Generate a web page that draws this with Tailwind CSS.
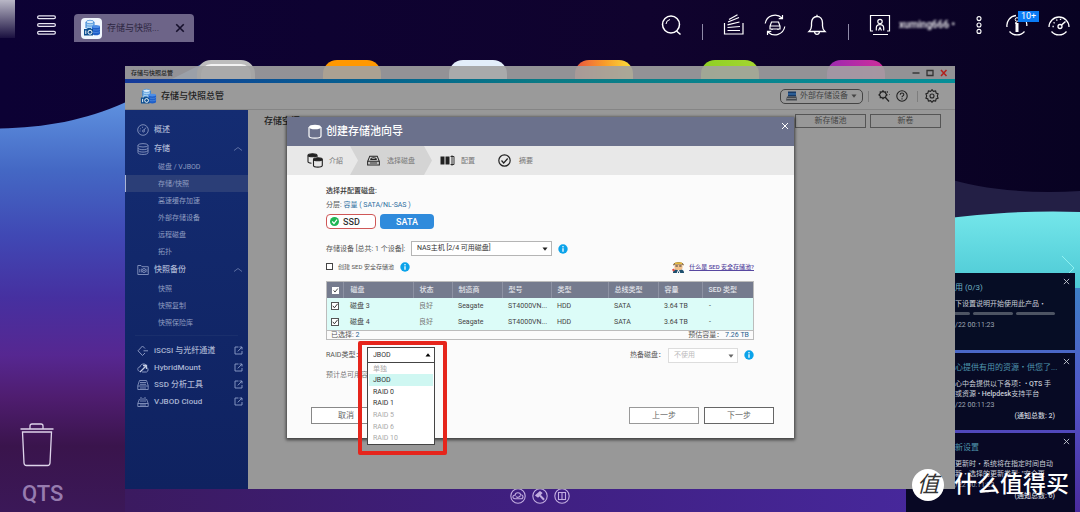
<!DOCTYPE html>
<html lang="zh-CN">
<head>
<meta charset="utf-8">
<meta name="viewport" content="width=device-width, initial-scale=1">
<title>存储与快照总管</title>
<script src="https://cdn.jsdelivr.net/npm/@tailwindcss/browser@4"></script>
</head>
<body class="font-['Roboto','Noto_Sans_CJK_SC',sans-serif] text-[7px] leading-[10px] text-[#555]">
<svg class="hidden">
  <defs>
    <symbol id="app" viewBox="0 0 18 18">
      <path d="M3 3v8c0 1 2 2 4 2s4-1 4-2V3z" fill="#a9d2f3"/><ellipse cx="7" cy="3" rx="4" ry="1.700" fill="#dcecf9" stroke="#4d93d9" stroke-width=".8"/>
      <path d="M3 3v6M11 3v4" stroke="#2f7fd0" stroke-width="1"/><path d="M3 6c1 1.500 7 1.500 8 0" stroke="#4d93d9" stroke-width=".8" fill="none"/>
      <path d="M9 7.500v7c0 1 2 1.800 4 1.800s4-.8 4-1.800v-7z" fill="#1f5fc9"/><ellipse cx="13" cy="7.500" rx="4" ry="1.500" fill="#4d8ee6"/>
      <path d="M9 10c1 1.400 7 1.400 8 0M9 12.500c1 1.400 7 1.400 8 0" stroke="#6ba4ee" stroke-width=".5" fill="none"/>
      <path d="M1 10h3l.7-1h3l.7 1H10v6.500H1z" fill="#0d4f91"/><circle cx="7" cy="13.200" r="2" fill="none" stroke="#fff" stroke-width="1"/><path d="M2.800 11.500v3.500" stroke="#fff" stroke-width="1"/>
    </symbol>
    <symbol id="info" viewBox="0 0 10 10"><circle cx="5" cy="5" r="4.700" fill="#0ba3ea"/><circle cx="5" cy="2.700" r=".8" fill="#fff"/><path d="M5 4.200v3.600" stroke="#fff" stroke-width="1.300"/></symbol>
    <symbol id="ext" viewBox="0 0 9 9"><path d="M4.500 1H1v7h7V5M5.500 1H8v2.500M8 1 3.800 5.400" fill="none" stroke="#8f9fca" stroke-width=".9"/></symbol>
    <symbol id="tick" viewBox="0 0 8 8"><path d="M1.800 3.800 3.400 5.800 6.600 1.800" fill="none" stroke="#333" stroke-width="1"/></symbol>
    <symbol id="x" viewBox="0 0 8 8"><path d="M1 1l6 6M7 1 1 7" fill="none" stroke="currentColor" stroke-width="1"/></symbol>
    <symbol id="down" viewBox="0 0 6 4"><path d="M.5.5h5L3 3.800z" fill="currentColor"/></symbol>
    <symbol id="up" viewBox="0 0 8 4"><path d="M0 3.500 4 .5l4 3" fill="none" stroke="#6f80b0" stroke-width=".8"/></symbol>
  </defs>
</svg>

<div class="relative h-screen overflow-hidden bg-[#0c0230]">
  <!-- Wallpaper -->
  <svg class="absolute inset-0 h-full w-full" viewBox="0 0 1080 512" preserveAspectRatio="none">
    <defs>
      <linearGradient id="sky" x1="0" y1="0" x2="1" y2="0"><stop offset="0" stop-color="#0c0134"/><stop offset=".6" stop-color="#10032e"/><stop offset="1" stop-color="#080222"/></linearGradient>
      <linearGradient id="left" x1="0" y1="100" x2="0" y2="512" gradientUnits="userSpaceOnUse"><stop offset="0" stop-color="#5f92e0"/><stop offset=".17" stop-color="#4468c4"/><stop offset=".33" stop-color="#4048b4"/><stop offset=".48" stop-color="#4630a0"/><stop offset=".62" stop-color="#562791"/><stop offset=".72" stop-color="#4f1d70"/><stop offset=".84" stop-color="#3a144c"/><stop offset="1" stop-color="#3b1858"/></linearGradient>
      <linearGradient id="right" x1="0" y1="288" x2="0" y2="512" gradientUnits="userSpaceOnUse"><stop offset="0" stop-color="#3e7fc6"/><stop offset=".5" stop-color="#5354c8"/><stop offset="1" stop-color="#4a2a9c"/></linearGradient>
      <linearGradient id="teal" x1="0" y1="212" x2="0" y2="290" gradientUnits="userSpaceOnUse"><stop offset="0" stop-color="#74e6ea"/><stop offset="1" stop-color="#4bc8d4"/></linearGradient>
      <linearGradient id="floor" x1="0" y1="0" x2="1" y2="0"><stop offset="0" stop-color="#3b1a60"/><stop offset=".5" stop-color="#3f1f80"/><stop offset="1" stop-color="#47289c"/></linearGradient>
      <linearGradient id="corner" x1="0" y1="0" x2="0" y2="1"><stop offset="0" stop-color="#b9b7c6"/><stop offset="1" stop-color="#1a1040"/></linearGradient>
    </defs>
    <path fill="url(#sky)" d="M0 0h1080v300H0z"/>
    <path fill="#231f45" d="M940 176c40 14 90 18 140 15v60H940z"/>
    <path fill="url(#teal)" d="M940 219c40-5 90-9 140-7v90H940z"/>
    <path fill="none" stroke="#8ff0f0" stroke-width="1" d="M1062 256l12 12-5 5"/>
    <path fill="url(#left)" d="M0 128.500c45-1 85-8 125-26l80-40v450H0z"/>
    <path fill="url(#right)" d="M940 288h140v224H940z"/>
    <path fill="url(#floor)" d="M125 480h800v32H125z"/>
    <path fill="url(#corner)" d="M0 0h15v38H0z"/>
  </svg>

  <!-- Desktop application icons -->
  <div class="absolute left-[197px] top-[60px] flex gap-[68px]" aria-hidden="true">
    <span class="h-12 w-[58px] rounded-[14px] border-4 border-[#bdbdbd] bg-[#f2f2f2]"></span>
    <span class="h-12 w-[58px] rounded-[14px] bg-[#ff9800]"></span>
    <span class="h-12 w-[58px] rounded-[14px] bg-[#e3eefa]"></span>
    <span class="h-12 w-[58px] rounded-[14px] bg-linear-to-r from-[#e8503c] via-[#f79a2a] to-[#f8e03a]"></span>
    <span class="h-12 w-[58px] rounded-[14px] bg-linear-to-r from-[#8ed024] to-[#a5d62f]"></span>
    <span class="h-12 w-[58px] rounded-[14px] bg-linear-to-r from-[#9c27b0] to-[#d02a9a]"></span>
  </div>

  <!-- Taskbar -->
  <header class="relative flex h-[50px] items-center pl-[37px] pr-[10px]">
    <button aria-label="主菜单" class="h-5 w-[19px]">
      <svg viewBox="0 0 19 20" class="h-5 w-[19px]" fill="none" stroke="#e8e6f2" stroke-width="1.200"><rect x=".6" y=".8" width="17.800" height="2.800" rx="1.400"/><rect x=".6" y="8.600" width="17.800" height="2.800" rx="1.400"/><rect x=".6" y="16.400" width="17.800" height="2.800" rx="1.400"/></svg>
    </button>
    <div class="ml-[18px] mt-[6px] flex h-7 w-[120px] items-center rounded-t bg-[#6d6488] px-[7px]">
      <span class="flex h-[21px] w-[21px] items-center justify-center rounded bg-[#f1f6fd]"><svg class="h-[18px] w-[18px]"><use href="#app"/></svg></span>
      <span class="ml-[5px] flex-1 whitespace-nowrap text-[9px] text-[#2d2742]">存储与快照...</span>
      <button aria-label="关闭" class="mr-[2px] text-[#16102c]"><svg class="h-[10px] w-[10px]" viewBox="0 0 8 8"><path d="M1 1l6 6M7 1 1 7" stroke="currentColor" stroke-width="1.300"/></svg></button>
    </div>
    <nav class="ml-auto flex items-center text-white">
      <button aria-label="搜索"><svg class="h-[22px] w-[22px]" viewBox="0 0 22 22" fill="none" stroke="currentColor" stroke-width="1.500"><circle cx="11" cy="10.500" r="8.500"/><path d="M16.500 17l4 3.500"/><path d="M6 10a5 5 0 0 1 4-4.500" stroke-width="1"/></svg></button>
      <span class="ml-5 mt-[14px] h-4 w-px bg-[#8f8aa8]"></span>
      <button aria-label="后台任务" class="ml-[20px]"><svg class="h-[22px] w-[22px]" viewBox="0 0 22 22" fill="none" stroke="currentColor" stroke-width="1.200"><path d="M1.500 9v11h18.500V9M4.500 16.500h12.500M4.500 13.500 17 12.500M4.500 10.800 16.500 8M5 8 16 3.500M6 5.500 14.500.8"/></svg></button>
      <button aria-label="外接设备" class="ml-[19px]"><svg class="h-[22px] w-[22px]" viewBox="0 0 22 22" fill="none" stroke="currentColor" stroke-width="1.200"><path d="M1.200 9.500A10 10 0 0 1 18 4M20.800 12.500A10 10 0 0 1 4 18M18.500 1v3.700h-3.800M3.500 21v-3.700h3.800"/><path d="M7.500 8h7l1.500 4v3H6v-3zM6 12h10M8 15v1M14 15v1"/></svg></button>
      <button aria-label="通知" class="ml-[20px]"><svg class="h-[22px] w-[22px]" viewBox="0 0 22 22" fill="none" stroke="currentColor" stroke-width="1.300"><path d="M3 17.500h16c-1.700-1.500-2.500-3-2.500-5.500V9c0-4-2.300-6.500-5.500-6.500S5.500 5 5.500 9v3c0 2.500-.8 4-2.500 5.500zM11 .8v1.700M8.500 18c.3 1.700 1 2.300 2.500 2.300s2.200-.6 2.500-2.300"/></svg></button>
      <span class="ml-[20px] mt-[14px] h-4 w-px bg-[#8f8aa8]"></span>
      <button aria-label="用户" class="ml-[20px] flex items-center gap-[8px]"><svg class="h-[22px] w-[22px]" viewBox="0 0 22 22" fill="none" stroke="currentColor" stroke-width="1.200"><path d="M4 17H1.500V1.500h19V17H18M4 20.500h15"/><circle cx="11" cy="7.500" r="2.200"/><path d="M7.300 16.500V14c0-2 1.500-3.300 3.700-3.300s3.700 1.300 3.700 3.300v2.500M9.500 16.500l1.500-3 1.500 3"/></svg>
        <span class="w-[55px] whitespace-nowrap text-left text-[10px] font-medium blur-[1px]">xuming666 •</span></button>
      <button aria-label="更多" class="ml-[22px]"><svg class="h-[18px] w-[6px]" viewBox="0 0 6 18" fill="none" stroke="currentColor" stroke-width="1.100"><circle cx="3" cy="2.600" r="2"/><circle cx="3" cy="9" r="2"/><circle cx="3" cy="15.400" r="2"/></svg></button>
      <button aria-label="帮助" class="relative ml-[24px]"><svg class="h-[22px] w-[22px]" viewBox="0 0 22 22" fill="none" stroke="currentColor" stroke-width="1.300"><path d="M1 13a10 10 0 0 1 9-11.500M3.500 17.500a10 10 0 0 0 15 0M18.500 4.500A10 10 0 0 1 20.800 12"/><circle cx="11" cy="5.500" r="1.800" stroke-width="1"/><path d="M11 9v9" stroke-width="3"/><path d="M9 9h2"/></svg>
        <span class="absolute -top-[3px] left-[12px] flex h-[11px] w-[21px] items-center justify-center bg-[#0a7bf5] text-[9px] leading-none">10+</span></button>
      <button aria-label="资源监控" class="ml-[20px]"><svg class="h-[22px] w-[22px]" viewBox="0 0 22 22" fill="none" stroke="currentColor" stroke-width="1.300"><path d="M1 13A10 10 0 1 1 21 13M3.500 17.500a10 10 0 0 0 15 0"/><circle cx="12" cy="12.500" r="2"/><path d="m13.500 11 4-3.500" stroke-width="1.600"/><path d="M4.500 12.500h1.300M5.500 8.500l1.200.6M8.500 5.500l.7 1.200M12.500 4.800v1.300" /></svg></button>
    </nav>
  </header>

  <!-- Recycle bin and brand -->
  <div class="absolute bottom-[7px] left-[20px] flex flex-col">
    <svg class="h-11 w-[34px]" viewBox="0 0 34 44" fill="none" stroke="#ded4ea" stroke-width="1.300"><path d="M.5 6h33M10 5.500V3c0-1.200.8-2 2-2h9c1.200 0 2 .8 2 2v2.500M2.500 9h29L30 40c-.1 1.500-1 2.500-2.500 2.500h-21C5 42.500 4.100 41.500 4 40z"/></svg>
    <span class="ml-[2px] mt-4 text-[22px] font-medium leading-[22px] text-[#977caf]">QTS</span>
  </div>

  <!-- Notifications -->
  <aside class="absolute bottom-0 right-[5px] top-[273px] flex w-[169px] flex-col gap-[3px] text-[#c9ced8]">
    <article class="relative h-[77px] bg-[#060d25] pl-[49px] pr-5 pt-[10px]">
      <button aria-label="关闭" class="absolute right-[5px] top-[5px]"><svg class="h-[7px] w-[7px]"><use href="#x"/></svg></button>
      <h3 class="text-[8px] text-[#6fb0c2]">用 (0/3)</h3>
      <p class="mt-[6px] whitespace-nowrap">下设置说明开始使用此产品・</p>
      <div class="mt-[3px] flex gap-[3px]"><span class="h-[3px] w-[15px] rounded-r bg-[#4d5463]"></span><span class="h-[3px] flex-1 rounded bg-[#4d5463]"></span><span class="h-[3px] flex-1 rounded bg-[#4d5463]"></span></div>
      <p class="mt-[5px] text-[#9fa6b4]">/22 00:11:23</p>
    </article>
    <article class="relative h-[77px] bg-[#070a24] pl-[49px] pr-5 pt-[10px]">
      <button aria-label="关闭" class="absolute right-[5px] top-[5px]"><svg class="h-[7px] w-[7px]"><use href="#x"/></svg></button>
      <h3 class="whitespace-nowrap text-[8px] text-[#4f97ae]">心提供有用的资源・供您了...</h3>
      <p class="mt-[6px] whitespace-nowrap">心中会提供以下各项：• <b class="font-medium">QTS</b> 手<br>或资源 • <b class="font-medium">Helpdesk</b>支持平台</p>
      <p class="mt-px text-[#9fa6b4]">/22 00:11:23</p>
      <p class="mt-px text-right font-medium">(通知总数: 2)</p>
    </article>
    <article class="relative flex-1 bg-[#080824] pl-[49px] pr-5 pt-[10px]">
      <button aria-label="关闭" class="absolute right-[5px] top-[5px]"><svg class="h-[7px] w-[7px]"><use href="#x"/></svg></button>
      <h3 class="text-[8px] text-[#4f97ae]">新设置</h3>
      <p class="mt-[6px] whitespace-nowrap">更新时・系统将在指定时间自动<br>新・选择的更新类型: "安全更</p>
      <p class="mt-px text-[#9fa6b4]">/22 00:11:23</p>
      <p class="mt-px text-right font-medium">(通知总数: 6)</p>
    </article>
  </aside>

  <!-- Dock -->
  <div class="absolute bottom-[8px] left-1/2 flex -translate-x-1/2 gap-[6px]">
    <a href="#" aria-label="云"><svg class="h-4 w-4" viewBox="0 0 16 16" fill="none" stroke="#c3aee0" stroke-width="1.100"><circle cx="8" cy="8" r="7.200"/><path d="M11.500 10.800H5c-3 0-2.500-4 0-3.500C5.500 4 10 4 10.800 6.800c3 0 2.500 4 .7 4M6 8.500c1 1.500 3.500 1 4.500-1"/></svg></a>
    <a href="#" aria-label="工具"><svg class="h-4 w-4" viewBox="0 0 16 16" fill="none" stroke="#c3aee0" stroke-width="1.100"><circle cx="8" cy="8" r="7.200"/><path d="M3.800 7.500 8 3.800 9.800 5 6 9z" fill="#c3aee0"/><path d="m8 7.500 4 4.200" stroke-width="2"/></svg></a>
    <a href="#" aria-label="书"><svg class="h-4 w-4" viewBox="0 0 16 16" fill="none" stroke="#c3aee0" stroke-width="1.100"><circle cx="8" cy="8" r="7.200"/><path d="M4.500 4.500H8v7H4.500zM8 4.500h3.500v7H8z"/></svg></a>
  </div>

  <!-- Storage manager window -->
  <main class="absolute bottom-[23px] left-[125px] right-[125px] top-[66px] flex flex-col">
    <div class="flex h-[13px] shrink-0 items-center bg-[#a2a2a2]/90 pl-[6px] pr-[7px] text-[6px] font-medium text-[#222]">
      <span>存储与快照总管</span>
      <div class="ml-auto flex items-center gap-[6px]">
        <button aria-label="最小化"><svg class="h-2 w-2" viewBox="0 0 8 8"><path d="M.5 4h7" stroke="#333" stroke-width="1.400"/></svg></button>
        <button aria-label="最大化"><svg class="h-2 w-2" viewBox="0 0 8 8"><path d="M1 1.500h6v5H1z" fill="none" stroke="#333" stroke-width="1.300"/></svg></button>
        <button aria-label="关闭窗口"><svg class="h-2 w-2" viewBox="0 0 8 8"><path d="m1 1 5.500 6M6.500 1 1 7" stroke="#b3201c" stroke-width="1.500"/></svg></button>
      </div>
    </div>
    <div class="h-1 shrink-0 bg-linear-to-r from-[#15399a] via-[#0b7a85] to-[#068f98]"></div>
    <div class="flex h-[27px] shrink-0 items-center border-b border-[#858585] bg-[#9a9a9a] pl-[15px] pr-4">
      <svg class="h-[17px] w-[17px]"><use href="#app"/></svg>
      <h1 class="ml-[4px] text-[9px] font-medium text-[#222]">存储与快照总管</h1>
      <button class="ml-auto flex h-[15px] w-[83px] items-center rounded-[5px] border border-[#444] px-[5px] text-[8px] text-[#444]">
        <svg class="mr-[3px] h-[10px] w-[11px]" viewBox="0 0 11 10"><path d="M2 .5h8v5H2z" fill="#173a66"/><path d="M2 3h8" stroke="#3f7ec2"/><path d="M1 5.500h9.500l.5 4H0z" fill="#44494f"/><path d="M1 7.500h9" stroke="#aaa" stroke-width=".6"/></svg>
        外部存储设备
        <svg class="ml-auto h-[4px] w-[6px]"><use href="#down"/></svg>
      </button>
      <span class="ml-[5px] h-[11px] w-px bg-[#7d7d7d]"></span>
      <button aria-label="诊断" class="ml-[9px]"><svg class="h-3 w-3" viewBox="0 0 12 12" fill="none" stroke="#222" stroke-width="1.200"><path d="m5 .8 1 1.200 1.700-.2v1.700L9 5 7.700 6v1.700L6 7.500 5 8.800 4 7.500l-1.700.2V6L1 5l1.300-1.500V1.800L4 2zM7 7l4 4.500"/><path d="M9.500 1v2M11 4.500h.8" stroke-width=".7"/></svg></button>
      <button aria-label="帮助" class="ml-[6px]"><svg class="h-3 w-3" viewBox="0 0 12 12" fill="none" stroke="#222" stroke-width="1.100"><circle cx="6" cy="6" r="5.200"/><path d="M4.200 4.700C4.200 2.400 7.800 2.400 7.800 4.600 7.800 6 6 5.800 6 7.300M6 8.300v1.200"/></svg></button>
      <span class="ml-[9px] h-[11px] w-px bg-[#7d7d7d]"></span>
      <button aria-label="设置" class="ml-[7px]"><svg class="h-[14px] w-[14px]" viewBox="0 0 14 14" fill="none" stroke="#222" stroke-width="1.100"><path d="m7 .7 1.400 1.700 2.200-.5.500 2.100 2 .9-.8 2.100.8 2.100-2 .9-.5 2.100-2.200-.5L7 13.300l-1.400-1.700-2.200.5-.5-2.100-2-.9L1.700 7 .9 4.900l2-.9.5-2.100 2.200.5z"/><circle cx="7" cy="7" r="2"/></svg></button>
    </div>

    <div class="flex min-h-0 flex-1">
      <nav class="w-[123px] shrink-0 bg-linear-to-b from-[#142c72] to-[#0f2260] pt-[11px] text-[#8f9cc0]">
        <a href="#" class="flex h-[18px] items-center px-[12px] text-[8px] font-medium text-[#a9b4d2]"><svg class="mr-[5px] h-3 w-3" viewBox="0 0 12 12" fill="none" stroke="#8795c0" stroke-width=".9"><circle cx="6" cy="6" r="5.300"/><circle cx="6.500" cy="7" r="1"/><path d="m7 6 2-2.500M2.500 7h1M3 4.500l.8.5M5.500 2.800v1"/></svg>概述</a>
        <a href="#" class="flex h-[19px] items-center px-[12px] text-[8px] font-medium text-[#a9b4d2]"><svg class="mr-[5px] h-3 w-3" viewBox="0 0 12 12" fill="none" stroke="#8795c0" stroke-width=".9"><ellipse cx="6" cy="2.300" rx="5" ry="1.700"/><path d="M1 2.300v7.500c0 2.200 10 2.200 10 0V2.300M1 5c0 2.200 10 2.200 10 0M1 7.400c0 2.200 10 2.200 10 0"/></svg>存储<svg class="ml-auto mr-[-6px] h-1 w-2"><use href="#up"/></svg></a>
        <ul>
          <li><a href="#" class="flex h-[17px] items-center pl-[33px]">磁盘 / VJBOD</a></li>
          <li><a href="#" class="flex h-[17px] items-center border-l border-[#aab4d4] bg-[#2b3e77] pl-[32px]">存储/快照</a></li>
          <li><a href="#" class="flex h-[17px] items-center pl-[33px]">高速缓存加速</a></li>
          <li><a href="#" class="flex h-[17px] items-center pl-[33px]">外部存储设备</a></li>
          <li><a href="#" class="flex h-[17px] items-center pl-[33px]">远程磁盘</a></li>
          <li><a href="#" class="flex h-[17px] items-center pl-[33px]">拓扑</a></li>
        </ul>
        <a href="#" class="flex h-5 items-center px-[12px] text-[8px] font-medium text-[#a9b4d2]"><svg class="mr-[5px] h-3 w-3" viewBox="0 0 12 12" fill="none" stroke="#8795c0" stroke-width=".9"><path d="M.8 10.500v-9H4l1 1.200h6.300v7.800zM2.800 5v3.500"/><circle cx="7" cy="6.500" r="2"/><circle cx="7" cy="6.500" r=".5"/><path d="M4.500 4.500v4M10 4.500v4" stroke-width=".6"/></svg>快照备份<svg class="ml-auto mr-[-6px] h-1 w-2"><use href="#up"/></svg></a>
        <ul>
          <li><a href="#" class="flex h-[17px] items-center pl-[33px]">快照</a></li>
          <li><a href="#" class="flex h-[17px] items-center pl-[33px]">快照复制</a></li>
          <li><a href="#" class="flex h-[17px] items-center pl-[33px]">快照保险库</a></li>
        </ul>
        <hr class="mx-[10px] mb-[6px] mt-[4px] border-[#1a2f6c]">
        <a href="#" class="flex h-[17px] items-center pl-[12px] pr-[5px] text-[8px] font-medium text-[#a9b4d2]"><svg class="mr-[5px] h-3 w-3" viewBox="0 0 12 12" fill="none" stroke="#8795c0" stroke-width="1"><path d="M8 3.500 5.500 1 1 5.800 5.500 10.500 8 8M6.500 5.800H11"/></svg>iSCSI 与光纤通道<svg class="ml-auto h-[9px] w-[9px]"><use href="#ext"/></svg></a>
        <a href="#" class="flex h-[17px] items-center pl-[12px] pr-[5px] text-[8px] font-medium text-[#a9b4d2]"><svg class="mr-[5px] h-3 w-3" viewBox="0 0 12 12" fill="none" stroke="#8795c0" stroke-width="1"><path d="M2.500 9.500C-.5 8 1 4.500 3 5c.5-3.500 5-4 6.500-1.500M5 10h4.500c2-.5 2-3.500.5-4.500"/><path d="m3 10 6-6M6 3.500h3.500V7" stroke="#c4cce2" stroke-width="1.300"/></svg>HybridMount<svg class="ml-auto h-[9px] w-[9px]"><use href="#ext"/></svg></a>
        <a href="#" class="flex h-[17px] items-center pl-[12px] pr-[5px] text-[8px] font-medium text-[#a9b4d2]"><svg class="mr-[5px] h-3 w-3" viewBox="0 0 12 12" fill="none" stroke="#8795c0" stroke-width=".9"><path d="M2.500 1.500h7l1.700 5v4H.8v-4zM.8 7h10.400M3 3.500h6M3 5.300h6M3 9h6"/></svg>SSD 分析工具<svg class="ml-auto h-[9px] w-[9px]"><use href="#ext"/></svg></a>
        <a href="#" class="flex h-[17px] items-center pl-[12px] pr-[5px] text-[8px] font-medium text-[#a9b4d2]"><svg class="mr-[5px] h-3 w-3" viewBox="0 0 12 12" fill="none" stroke="#8795c0" stroke-width=".9"><path d="M2.500 3 .8 7.500v3h10.400v-3L9.500 3M.8 7.500h10.400M4 1v5M6 2v4M8 1v5M3 9h6"/></svg>VJBOD Cloud<svg class="ml-auto h-[9px] w-[9px]"><use href="#ext"/></svg></a>
      </nav>
      <section class="flex flex-1 items-start bg-[#989898] pl-4 pr-[14px] pt-[4px]">
        <h2 class="mt-[2px] text-[9px] font-medium text-[#222]">存储空间</h2>
        <button class="ml-auto h-[14px] w-[71px] border border-[#555] text-[8px] text-[#444]">新存储池</button>
        <button class="ml-1 h-[14px] w-[71px] border border-[#555] text-[8px] text-[#444]">新卷</button>
      </section>
    </div>

    <!-- Create storage pool wizard -->
    <div role="dialog" aria-label="创建存储池向导" class="absolute left-[162px] right-[161px] top-[51px] flex flex-col bg-[#fbfbfb] shadow-[0_1px_3px_1px_#0009]">
      <div class="flex h-[29px] items-center bg-[#6b718c] pl-[21px] pr-[5px] text-white">
        <svg class="h-[15px] w-[14px]" viewBox="0 0 14 15"><path d="M1 3v9c0 2.800 12 2.800 12 0V3" fill="none" stroke="#fff" stroke-width="1.200"/><ellipse cx="7" cy="3" rx="6" ry="2.300" fill="#fff"/></svg>
        <h2 class="ml-[4px] text-[11px] font-medium">创建存储池向导</h2>
        <button aria-label="关闭向导" class="mb-[11px] ml-auto"><svg class="h-2 w-2"><use href="#x"/></svg></button>
      </div>
      <ol class="flex h-[29px] bg-[#e8e8e8] text-[#777]">
        <li class="flex w-[63px] items-center pl-5"><svg class="mr-[6px] h-[15px] w-4" viewBox="0 0 16 15" fill="none" stroke="#222" stroke-width="1.100"><path d="M1 2.500v6.300c0 .8 1.500 1.300 3.500 1.400M10 2.500V4"/><ellipse cx="5.500" cy="2.300" rx="4.500" ry="1.500" fill="#222"/><path d="M6.500 6.500v6c0 2.200 8.800 2.200 8.800 0v-6"/><ellipse cx="10.900" cy="6.300" rx="4.400" ry="1.500" fill="#222"/></svg>介紹</li>
        <li aria-current="step" class="flex w-[82px] items-center bg-[#d4d4d4] pl-[17px] [clip-path:polygon(0_0,74px_0,100%_50%,74px_100%,0_100%,8px_50%)]"><svg class="mr-[7px] h-[11px] w-[13px]" viewBox="0 0 14 11" fill="none" stroke="#222" stroke-width="1.100"><path d="M3 .8h8l2.300 5.500v4H.7v-4zM.7 6.300h12.600M3 8.300h8"/><path d="M4 4.500c0-2.500 6-2.500 6 0z"/></svg>选择磁盘</li>
        <li class="flex w-[63px] items-center pl-2"><svg class="mr-[6px] h-[11px] w-[15px]" viewBox="0 0 15 11"><path d="M.5 1.500h4v8h-4zM5.500 1.500h4v8h-4z" fill="#222"/><path d="M10.500 1.500h3.500v8h-3.500M12 .3v10.400" stroke="#222" stroke-width=".9" fill="none"/></svg>配置</li>
        <li class="flex items-center pl-[3px]"><svg class="mr-[8px] h-[13px] w-[13px]" viewBox="0 0 13 13" fill="none" stroke="#222" stroke-width="1.200"><circle cx="6.500" cy="6.500" r="5.700"/><path d="m3.500 6.500 2.200 2.500 4-4.500"/></svg>摘要</li>
      </ol>

      <form class="flex flex-col pb-[14px] pl-[39px] pr-10 pt-[11px]">
        <p class="font-medium text-[#333]">选择并配置磁盘:</p>
        <p class="mt-[4px]">分层: <span class="text-[#2f6f9f]">容量 ( SATA/NL-SAS )</span></p>
        <div class="mt-[4px] flex gap-1">
          <button type="button" class="flex h-[15px] w-[50px] items-center gap-[4px] rounded border border-[#cf5757] bg-white pl-[3px] text-[9px] font-medium text-[#333]"><svg class="h-[9px] w-[9px]" viewBox="0 0 9 9"><circle cx="4.500" cy="4.500" r="4.500" fill="#1fb553"/><path d="M2.200 4.500 4 6.500l3-3.800" fill="none" stroke="#fff" stroke-width="1.200"/></svg>SSD</button>
          <button type="button" class="h-[15px] w-[54px] rounded bg-[#2f8bdc] text-[9px] font-medium text-white">SATA</button>
        </div>
        <div class="mt-3 flex h-[15px] items-center">
          <label for="dev" class="w-[85px] whitespace-nowrap">存储设备 [总共: 1 个设备]:</label>
          <div class="relative w-[141px]">
            <select id="dev" class="block h-[15px] w-full appearance-none border border-[#b5b5b5] bg-white pl-[5px] text-[7px] leading-[13px] text-[#333]"><option>NAS主机 [2/4 可用磁盘]</option></select>
            <svg class="pointer-events-none absolute right-[4px] top-[6px] h-[4px] w-[6px] text-[#222]"><use href="#down"/></svg>
          </div>
          <svg class="ml-[6px] h-[10px] w-[10px]"><use href="#info"/></svg>
        </div>
        <div class="mt-[4px] flex h-[13px] items-center">
          <label class="flex items-center gap-[5px] text-[6px]"><input type="checkbox" class="h-[7px] w-[7px] appearance-none border border-[#444] bg-white">创建 SED 安全存储池</label>
          <svg class="ml-[6px] h-[10px] w-[10px]"><use href="#info"/></svg>
          <svg class="ml-auto mr-[4px] h-3 w-[13px]" viewBox="0 0 13 12"><path d="M1 12c0-3 2-4 5.500-4S12 9 12 12z" fill="#1d4f6e"/><path d="M2.500 3.500h8V7c0 3-8 3-8 0z" fill="#f2c08a"/><path d="M1 4.500C1 0 12 0 12 4.500L10 3.500H3z" fill="#7a5a2a"/><path d="M3 1.500h7v1.500H3z" fill="#e6b93c"/><path d="M3.500 5h2.300M7.200 5h2.300" stroke="#333" stroke-width="1"/><path d="m6.500 9-1.300 3M6.500 9l1.300 3" stroke="#fff"/><path d="M0 8.500l2-1 1 2-2 1z" fill="#e0483e"/></svg>
          <a href="#" class="text-[6px] font-medium text-[#5747a0] underline">什么是 SED 安全存储池?</a>
        </div>
        <div class="mt-2 border border-[#bcbcbc]">
          <table class="w-full table-fixed border-collapse text-left text-[#444]">
            <colgroup><col class="w-[16px]"><col class="w-[70px]"><col class="w-[39px]"><col class="w-[50px]"><col class="w-[49px]"><col class="w-[57px]"><col class="w-[50px]"><col class="w-[44px]"><col></colgroup>
            <thead class="bg-[#757b8e] text-[#e4e6ec]">
              <tr class="h-4">
                <th class="p-0"><label class="ml-[5px] grid h-[7px] w-[7px]"><input type="checkbox" checked aria-label="全选" class="col-start-1 row-start-1 h-[7px] w-[7px] appearance-none bg-white"><svg class="pointer-events-none col-start-1 row-start-1 h-[7px] w-[7px]"><use href="#tick"/></svg></label></th>
                <th class="border-l border-[#8d92a3] p-0 pl-[7px] font-medium">磁盘</th>
                <th class="border-l border-[#8d92a3] p-0 pl-[6px] font-medium">状态</th>
                <th class="border-l border-[#8d92a3] p-0 pl-[6px] font-medium">制造商</th>
                <th class="border-l border-[#8d92a3] p-0 pl-[6px] font-medium">型号</th>
                <th class="border-l border-[#8d92a3] p-0 pl-[6px] font-medium">类型</th>
                <th class="border-l border-[#8d92a3] p-0 pl-[6px] font-medium">总线类型</th>
                <th class="border-l border-[#8d92a3] p-0 pl-[6px] font-medium">容量</th>
                <th class="border-l border-[#8d92a3] p-0 pl-[6px] font-medium">SED 类型</th>
              </tr>
            </thead>
            <tbody class="bg-[#dcfcf8]">
              <tr class="h-4">
                <td class="p-0"><label class="ml-[4px] grid h-2 w-2"><input type="checkbox" checked aria-label="磁盘 3" class="col-start-1 row-start-1 h-2 w-2 appearance-none border border-[#555] bg-white"><svg class="pointer-events-none col-start-1 row-start-1 h-2 w-2"><use href="#tick"/></svg></label></td>
                <td class="p-0 pl-[7px]">磁盘 3</td><td class="p-0 pl-[6px] text-[#777]">良好</td><td class="p-0 pl-[6px]">Seagate</td><td class="p-0 pl-[6px]">ST4000VN...</td><td class="p-0 pl-[6px]">HDD</td><td class="p-0 pl-[6px]">SATA</td><td class="p-0 pl-[6px]">3.64 TB</td><td class="p-0 pl-[7px]">-</td>
              </tr>
              <tr class="h-4">
                <td class="p-0"><label class="ml-[4px] grid h-2 w-2"><input type="checkbox" checked aria-label="磁盘 4" class="col-start-1 row-start-1 h-2 w-2 appearance-none border border-[#555] bg-white"><svg class="pointer-events-none col-start-1 row-start-1 h-2 w-2"><use href="#tick"/></svg></label></td>
                <td class="p-0 pl-[7px]">磁盘 4</td><td class="p-0 pl-[6px] text-[#777]">良好</td><td class="p-0 pl-[6px]">Seagate</td><td class="p-0 pl-[6px]">ST4000VN...</td><td class="p-0 pl-[6px]">HDD</td><td class="p-0 pl-[6px]">SATA</td><td class="p-0 pl-[6px]">3.64 TB</td><td class="p-0 pl-[7px]">-</td>
              </tr>
            </tbody>
          </table>
          <div class="flex h-[9px] items-center justify-between border-t border-[#bcbcbc] px-[4px] leading-[8px]"><span>已选择: <span class="text-[#1f5f90]">2</span></span><span>预估容量： <span class="text-[#1f5f90]">7.26 TB</span></span></div>
        </div>
        <div class="mt-[7px] flex h-4 items-center">
          <label for="raid" class="w-[41px] whitespace-nowrap">RAID类型：</label>
          <div class="relative z-10 w-[68px]">
            <select id="raid" class="block h-4 w-full appearance-none border border-[#444] bg-white pl-[5px] text-[7px] leading-[14px] text-[#333]"><option>JBOD</option><option disabled>单独</option><option>RAID 0</option><option>RAID 1</option><option disabled>RAID 5</option><option disabled>RAID 6</option><option disabled>RAID 10</option></select>
            <svg class="pointer-events-none absolute right-[4px] top-[6px] h-[4px] w-[6px] rotate-180 text-black"><use href="#down"/></svg>
            <ul class="absolute left-0 top-[15px] w-full border border-[#444] bg-white text-[#aaa]">
              <li class="flex h-[11px] items-center pl-[5px]">单独</li>
              <li class="mx-px flex h-3 items-center bg-[#cff7f2] pl-[4px] text-[#333]">JBOD</li>
              <li class="flex h-[11px] items-center pl-[5px] text-[#333]">RAID 0</li>
              <li class="flex h-3 items-center pl-[5px] text-[#333]">RAID 1</li>
              <li class="flex h-3 items-center pl-[5px]">RAID 5</li>
              <li class="flex h-[11px] items-center pl-[5px]">RAID 6</li>
              <li class="flex h-3 items-center pl-[5px]">RAID 10</li>
            </ul>
            <!-- Annotation frame around the open list -->
            <div class="pointer-events-none absolute -left-[9px] -right-[12px] -top-[6px] h-[114px] rounded-[2px] border-4 border-[#e6251c]"></div>
          </div>
          <label for="spare" class="ml-auto mr-[3px]">热备磁盘：</label>
          <div class="relative w-[70px]">
            <select id="spare" disabled class="block h-[15px] w-full appearance-none border border-[#ddd] bg-white pl-[5px] text-[7px] leading-[13px] text-[#bbb] opacity-100"><option>不使用</option></select>
            <svg class="pointer-events-none absolute right-[4px] top-[6px] h-[4px] w-[6px] text-[#666]"><use href="#down"/></svg>
          </div>
          <svg class="ml-[6px] h-[10px] w-[10px]"><use href="#info"/></svg>
        </div>
        <p class="mt-[7px] text-[#777]">预计总可用容量：</p>
        <div class="-ml-[15px] -mr-5 mt-[27px] flex">
          <button type="button" class="h-[17px] w-[70px] border border-[#888] bg-white text-[8px] text-[#666]">取消</button>
          <button type="button" class="ml-auto h-[17px] w-[70px] border border-[#999] bg-white text-[8px] text-[#666]">上一步</button>
          <button type="submit" class="ml-[5px] h-[17px] w-[70px] border border-[#666] bg-white text-[8px] text-[#666]">下一步</button>
        </div>
      </form>
    </div>
  </main>

  <!-- Site watermark -->
  <div class="pointer-events-none absolute bottom-[11px] right-[11px] flex items-center gap-[10px] text-white">
    <span class="flex h-8 w-8 items-center justify-center rounded-full bg-white text-[22px] italic leading-none text-[#333]">值</span>
    <span class="text-[23px] font-medium leading-8">什么值得买</span>
  </div>
</div>
</body>
</html>
